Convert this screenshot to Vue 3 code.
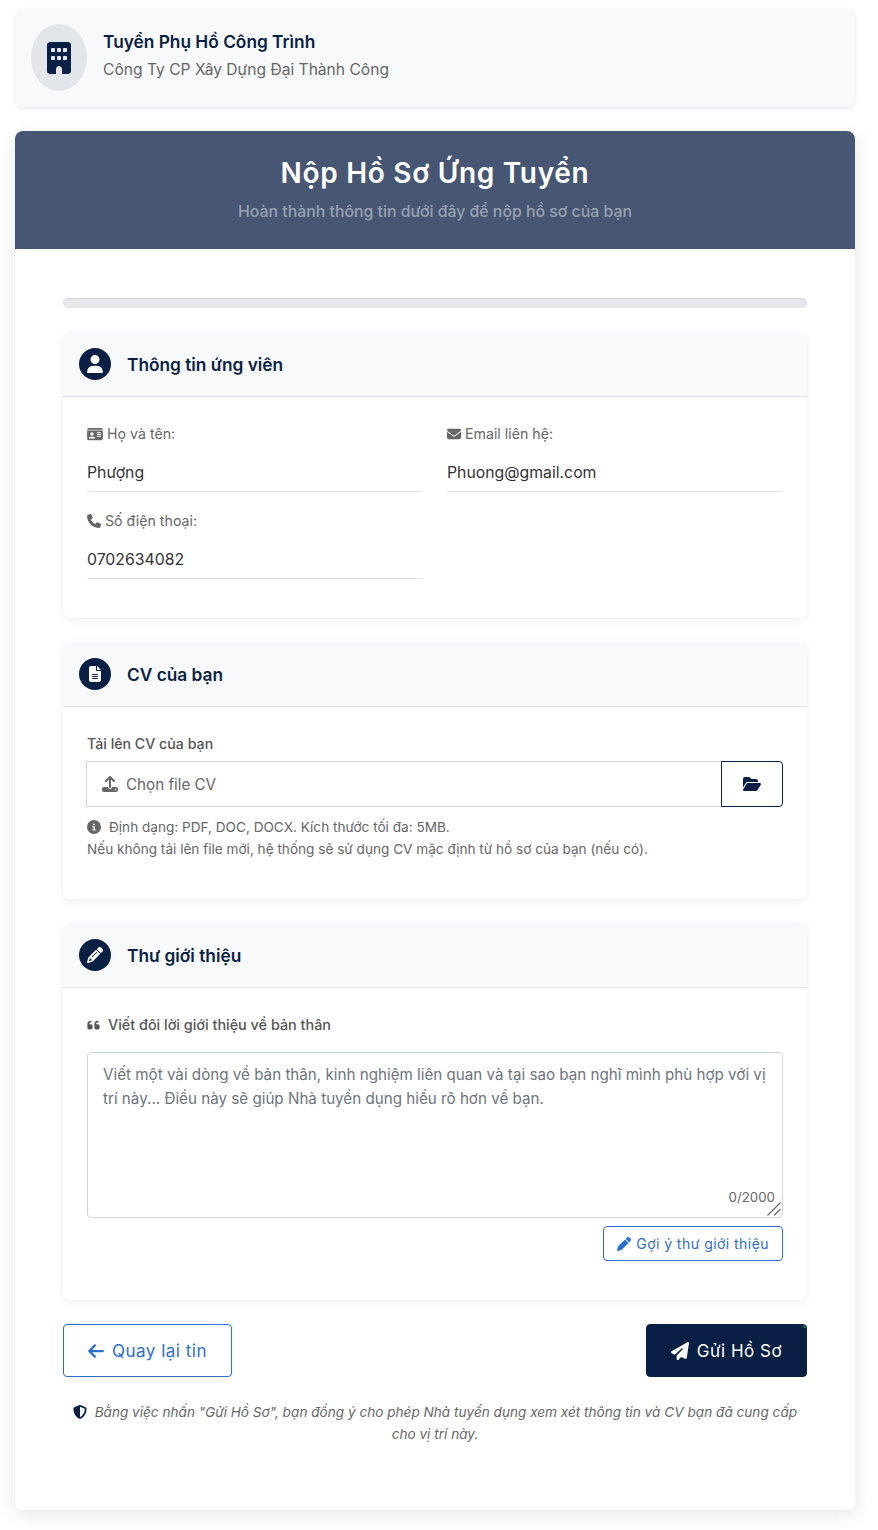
<template>
  <div class="page">
    <div class="job-bar">
      <div class="job-logo">
        <svg class="ic" viewBox="0 0 384 512" width="24" height="32"><path :d="icons.building" /></svg>
      </div>
      <div class="job-text">
        <div class="job-title">Tuyển Phụ Hồ Công Trình</div>
        <div class="job-company">Công Ty CP Xây Dựng Đại Thành Công</div>
      </div>
    </div>

    <div class="main-card">
      <div class="main-head">
        <h1>Nộp Hồ Sơ Ứng Tuyển</h1>
        <p>Hoàn thành thông tin dưới đây để nộp hồ sơ của bạn</p>
      </div>

      <div class="main-body">
        <div class="progress"></div>

        <section class="box">
          <div class="box-head">
            <span class="box-icon"><svg class="ic" viewBox="0 0 448 512" width="16" height="18"><path :d="icons.user" /></svg></span>
            <h2>Thông tin ứng viên</h2>
          </div>
          <div class="box-body info-grid">
            <div class="field" v-for="f in fields" :key="f.label">
              <label>
                <svg class="ic" :viewBox="f.box" :width="f.w" height="14"><path :d="f.icon" /></svg>
                {{ f.label }}
              </label>
              <input type="text" readonly :value="f.value" />
            </div>
          </div>
        </section>

        <section class="box">
          <div class="box-head">
            <span class="box-icon"><svg class="ic" viewBox="0 0 384 512" width="12" height="16"><path :d="icons.file" /></svg></span>
            <h2>CV của bạn</h2>
          </div>
          <div class="box-body cv-body">
            <div class="cv-label">Tải lên CV của bạn</div>
            <div class="file-row">
              <div class="file-name">
                <svg class="ic" viewBox="0 0 512 512" width="16" height="16"><path :d="icons.upload" /></svg>
                <span>Chọn file CV</span>
              </div>
              <button class="file-btn" type="button">
                <svg class="ic" viewBox="0 0 576 512" width="18" height="16"><path :d="icons.folder" /></svg>
              </button>
            </div>
            <div class="hint">
              <div><svg class="ic info" viewBox="0 0 512 512" width="14" height="14"><path :d="icons.info" /></svg>Định dạng: PDF, DOC, DOCX. Kích thước tối đa: 5MB.</div>
              <div>Nếu không tải lên file mới, hệ thống sẽ sử dụng CV mặc định từ hồ sơ của bạn (nếu có).</div>
            </div>
          </div>
        </section>

        <section class="box">
          <div class="box-head">
            <span class="box-icon"><svg class="ic" viewBox="0 0 512 512" width="16" height="16"><path :d="icons.pencil" /></svg></span>
            <h2>Thư giới thiệu</h2>
          </div>
          <div class="box-body letter-body">
            <div class="letter-label">
              <svg class="ic" viewBox="0 0 448 512" width="13" height="14"><path :d="icons.quote" /></svg>
              Viết đôi lời giới thiệu về bản thân
            </div>
            <div class="area-wrap">
              <textarea placeholder="Viết một vài dòng về bản thân, kinh nghiệm liên quan và tại sao bạn nghĩ mình phù hợp với vị trí này... Điều này sẽ giúp Nhà tuyển dụng hiểu rõ hơn về bạn."></textarea>
              <span class="counter">0/2000</span>
              <svg class="grip" viewBox="0 0 14 14" width="14" height="14">
                <path d="M0.5 13.5L13.5 0.5M7 13.5L13.5 7" />
              </svg>
            </div>
            <div class="suggest-row">
              <button class="suggest" type="button">
                <svg class="ic" viewBox="0 0 512 512" width="14" height="14"><path :d="icons.pen" /></svg>
                Gợi ý thư giới thiệu
              </button>
            </div>
          </div>
        </section>

        <div class="actions">
          <button class="back" type="button">
            <svg class="ic" viewBox="0 0 448 512" width="16" height="18"><path :d="icons.arrow" /></svg>
            Quay lại tin
          </button>
          <button class="send" type="button">
            <svg class="ic" viewBox="0 0 512 512" width="18" height="18"><path :d="icons.plane" /></svg>
            Gửi Hồ Sơ
          </button>
        </div>

        <p class="terms">
          <svg class="ic shield" viewBox="0 0 512 512" width="14" height="14"><path :d="icons.shield" /></svg>
          Bằng việc nhấn "Gửi Hồ Sơ", bạn đồng ý cho phép Nhà tuyển dụng xem xét thông tin và CV bạn đã cung cấp cho vị trí này.
        </p>
      </div>
    </div>
  </div>
</template>

<script setup>
const icons = {
  building: 'M48 0C21.5 0 0 21.5 0 48V464c0 26.5 21.5 48 48 48h96V432c0-26.5 21.5-48 48-48s48 21.5 48 48v80h96c26.5 0 48-21.5 48-48V48c0-26.5-21.5-48-48-48H48zM64 240c0-8.8 7.2-16 16-16h32c8.8 0 16 7.2 16 16v32c0 8.8-7.2 16-16 16H80c-8.8 0-16-7.2-16-16V240zm112-16h32c8.8 0 16 7.2 16 16v32c0 8.8-7.2 16-16 16H176c-8.8 0-16-7.2-16-16V240c0-8.8 7.2-16 16-16zm80 16c0-8.8 7.2-16 16-16h32c8.8 0 16 7.2 16 16v32c0 8.8-7.2 16-16 16H272c-8.8 0-16-7.2-16-16V240zM80 96h32c8.8 0 16 7.2 16 16v32c0 8.8-7.2 16-16 16H80c-8.8 0-16-7.2-16-16V112c0-8.8 7.2-16 16-16zm80 16c0-8.8 7.2-16 16-16h32c8.8 0 16 7.2 16 16v32c0 8.8-7.2 16-16 16H176c-8.8 0-16-7.2-16-16V112zM272 96h32c8.8 0 16 7.2 16 16v32c0 8.8-7.2 16-16 16H272c-8.8 0-16-7.2-16-16V112c0-8.8 7.2-16 16-16z',
  user: 'M224 256A128 128 0 1 0 224 0a128 128 0 1 0 0 256zm-45.7 48C79.8 304 0 383.8 0 482.3C0 498.7 13.3 512 29.7 512H418.3c16.4 0 29.7-13.3 29.7-29.7C448 383.8 368.2 304 269.7 304H178.3z',
  idCard: 'M0 96l576 0c0-35.3-28.7-64-64-64H64C28.7 32 0 60.7 0 96zm0 32V416c0 35.3 28.7 64 64 64H512c35.3 0 64-28.7 64-64V128H0zM64 405.3c0-29.5 23.9-53.3 53.3-53.3H234.7c29.5 0 53.3 23.9 53.3 53.3c0 5.9-4.8 10.7-10.7 10.7H74.7c-5.9 0-10.7-4.8-10.7-10.7zM176 192a64 64 0 1 1 0 128 64 64 0 1 1 0-128zm176 16c0-8.8 7.2-16 16-16H496c8.8 0 16 7.2 16 16s-7.2 16-16 16H368c-8.8 0-16-7.2-16-16zm0 64c0-8.8 7.2-16 16-16H496c8.8 0 16 7.2 16 16s-7.2 16-16 16H368c-8.8 0-16-7.2-16-16zm0 64c0-8.8 7.2-16 16-16H496c8.8 0 16 7.2 16 16s-7.2 16-16 16H368c-8.8 0-16-7.2-16-16z',
  envelope: 'M48 64C21.5 64 0 85.5 0 112c0 15.1 7.1 29.3 19.2 38.4L236.8 313.6c11.4 8.5 27 8.5 38.4 0L492.8 150.4c12.1-9.1 19.2-23.3 19.2-38.4c0-26.5-21.5-48-48-48H48zM0 176V384c0 35.3 28.7 64 64 64H448c35.3 0 64-28.7 64-64V176L294.4 339.2c-22.8 17.1-54 17.1-76.8 0L0 176z',
  phone: 'M164.9 24.6c-7.7-18.6-28-28.5-47.4-23.2l-88 24C12.1 30.2 0 46 0 64C0 311.4 200.6 512 448 512c18 0 33.8-12.1 38.6-29.5l24-88c5.3-19.4-4.6-39.7-23.2-47.4l-96-40c-16.3-6.8-35.2-2.1-46.3 11.6L304.7 368C234.3 334.7 177.3 277.7 144 207.3L193.3 167c13.7-11.2 18.4-30 11.6-46.3l-40-96z',
  file: 'M64 0C28.7 0 0 28.7 0 64V448c0 35.3 28.7 64 64 64H320c35.3 0 64-28.7 64-64V160H256c-17.7 0-32-14.3-32-32V0H64zM256 0V128H384L256 0zM112 256H272c8.8 0 16 7.2 16 16s-7.2 16-16 16H112c-8.8 0-16-7.2-16-16s7.2-16 16-16zm0 64H272c8.8 0 16 7.2 16 16s-7.2 16-16 16H112c-8.8 0-16-7.2-16-16s7.2-16 16-16zm0 64H272c8.8 0 16 7.2 16 16s-7.2 16-16 16H112c-8.8 0-16-7.2-16-16s7.2-16 16-16z',
  upload: 'M288 109.3V352c0 17.7-14.3 32-32 32s-32-14.3-32-32V109.3l-73.4 73.4c-12.5 12.5-32.8 12.5-45.3 0s-12.5-32.8 0-45.3l128-128c12.5-12.5 32.8-12.5 45.3 0l128 128c12.5 12.5 12.5 32.8 0 45.3s-32.8 12.5-45.3 0L288 109.3zM64 352H192c0 35.3 28.7 64 64 64s64-28.7 64-64H448c35.3 0 64 28.7 64 64v32c0 35.3-28.7 64-64 64H64c-35.3 0-64-28.7-64-64V416c0-35.3 28.7-64 64-64zM432 456a24 24 0 1 0 0-48 24 24 0 1 0 0 48z',
  folder: 'M88.7 223.8L0 375.8V96C0 60.7 28.7 32 64 32H181.5c17 0 33.3 6.7 45.3 18.7l26.5 26.5c12 12 28.3 18.7 45.3 18.7H416c35.3 0 64 28.7 64 64v32H144c-22.8 0-43.8 12.1-55.3 31.8zm27.6 16.1C122.1 230 132.6 224 144 224H544c11.5 0 22 6.1 27.7 16.1s5.7 22.2-.1 32.1l-112 192C453.9 474 443.4 480 432 480H32c-11.5 0-22-6.1-27.7-16.1s-5.7-22.2 .1-32.1l112-192z',
  info: 'M256 512A256 256 0 1 0 256 0a256 256 0 1 0 0 512zM216 336h24V272H216c-13.3 0-24-10.7-24-24s10.7-24 24-24h48c13.3 0 24 10.7 24 24v88h8c13.3 0 24 10.7 24 24s-10.7 24-24 24H216c-13.3 0-24-10.7-24-24s10.7-24 24-24zm40-208a32 32 0 1 1 0 64 32 32 0 1 1 0-64z',
  pencil: 'M410.3 231l11.3-11.3-33.9-33.9-62.1-62.1L291.7 89.8l-11.3 11.3-22.6 22.6L58.6 322.9c-10.4 10.4-18 23.3-22.2 37.4L1 480.7c-2.5 8.4-.2 17.5 6.1 23.7s15.3 8.5 23.7 6.1l120.3-35.4c14.1-4.2 27-11.8 37.4-22.2L387.7 253.7 410.3 231zM160 399.4l-9.1 22.7c-4 3.1-8.5 5.4-13.3 6.9L59.4 452l23-78.1c1.4-4.9 3.8-9.4 6.9-13.3l22.7-9.1v32c0 8.8 7.2 16 16 16h32zM362.7 18.7L348.3 33.2 325.7 55.8 314.3 67.1l33.9 33.9 62.1 62.1 33.9 33.9 11.3-11.3 22.6-22.6 14.5-14.5c25-25 25-65.5 0-90.5L453.3 18.7c-25-25-65.5-25-90.5 0zm-47.4 168l-144 144c-6.2 6.2-16.4 6.2-22.6 0s-6.2-16.4 0-22.6l144-144c6.2-6.2 16.4-6.2 22.6 0s6.2 16.4 0 22.6z',
  pen: 'M362.7 19.3L314.3 67.7 444.3 197.7l48.4-48.4c25-25 25-65.5 0-90.5L453.3 19.3c-25-25-65.5-25-90.5 0zm-71 71L58.6 323.5c-10.4 10.4-18 23.3-22.2 37.4L1 481.2C-1.5 489.7 .8 498.8 7 505s15.3 8.5 23.7 6.1l120.3-35.4c14.1-4.2 27-11.8 37.4-22.2L421.7 220.3 291.7 90.3z',
  quote: 'M0 216C0 149.7 53.7 96 120 96h8c17.7 0 32 14.3 32 32s-14.3 32-32 32h-8c-30.9 0-56 25.1-56 56v8h64c35.3 0 64 28.7 64 64v64c0 35.3-28.7 64-64 64H64c-35.3 0-64-28.7-64-64V216zm256 0c0-66.3 53.7-120 120-120h8c17.7 0 32 14.3 32 32s-14.3 32-32 32h-8c-30.9 0-56 25.1-56 56v8h64c35.3 0 64 28.7 64 64v64c0 35.3-28.7 64-64 64H320c-35.3 0-64-28.7-64-64V216z',
  arrow: 'M9.4 233.4c-12.5 12.5-12.5 32.8 0 45.3l160 160c12.5 12.5 32.8 12.5 45.3 0s12.5-32.8 0-45.3L109.2 288 416 288c17.7 0 32-14.3 32-32s-14.3-32-32-32l-306.7 0L214.6 118.6c12.5-12.5 12.5-32.8 0-45.3s-32.8-12.5-45.3 0l-160 160z',
  plane: 'M498.1 5.6c10.1 7 15.4 19.1 13.5 31.2l-64 416c-1.5 9.7-7.4 18.2-16 23s-18.9 5.4-28 1.6L284 427.7l-68.5 74.1c-8.9 9.7-22.9 12.9-35.2 8.1S160 493.2 160 480V396.4c0-4 1.5-7.8 4.2-10.7L331.8 202.8c5.8-6.3 5.6-16-.4-22s-15.7-6.4-22-.7L106 360.8 17.7 316.6C7.1 311.3 .3 300.7 0 288.9s5.9-22.8 16.1-28.7l448-256c10.7-6.1 23.9-5.5 34 1.4z',
  shield: 'M256 0c4.6 0 9.2 1 13.4 2.9L457.7 82.8c22 9.3 38.4 31 38.3 57.2c-.5 99.2-41.3 280.7-213.6 363.2c-16.7 8-36.1 8-52.8 0C57.3 420.7 16.5 239.2 16 140c-.1-26.2 16.3-47.9 38.3-57.2L242.7 2.9C246.8 1 251.4 0 256 0zm0 66.8V444.8C394 378 431.1 230.1 432 141.4L256 66.8l0 0z'
}

const fields = [
  { label: 'Họ và tên:', value: 'Phượng', icon: icons.idCard, box: '0 0 576 512', w: 16 },
  { label: 'Email liên hệ:', value: 'Phuong@gmail.com', icon: icons.envelope, box: '0 0 512 512', w: 14 },
  { label: 'Số điện thoại:', value: '0702634082', icon: icons.phone, box: '0 0 512 512', w: 14 }
]
</script>

<style>
html, body {
  background: #fff;
}
</style>

<style scoped>
.page {
  width: 840px;
  margin-left: 15px;
  padding: 8px 0 19px;
  font-family: Inter, "Noto Sans", sans-serif;
  color: #333;
}

.ic {
  fill: currentColor;
  flex: none;
}

.job-bar {
  height: 99px;
  box-sizing: border-box;
  display: flex;
  align-items: center;
  gap: 16px;
  padding: 0 16px;
  background: #f8f9fa;
  border-radius: 8px;
  box-shadow: 0 2px 5px rgba(0, 0, 0, 0.08);
  margin-bottom: 24px;
}

.job-logo {
  width: 56px;
  height: 67px;
  border-radius: 50%;
  background: #e2e5ea;
  color: #0a1f44;
  display: flex;
  align-items: center;
  justify-content: center;
}

.job-text {
  padding-bottom: 3px;
}

.job-title {
  font-size: 17.3px;
  font-weight: 600;
  color: #0a1f44;
  line-height: 24px;
  margin-bottom: 4px;
}

.job-company {
  font-size: 15.6px;
  color: #666;
  line-height: 24px;
}

.main-card {
  background: #fff;
  border-radius: 8px;
  box-shadow: 0 5px 20px rgba(0, 0, 0, 0.1);
  overflow: hidden;
}

.main-head {
  height: 118px;
  box-sizing: border-box;
  padding-top: 22px;
  background: #475773;
  text-align: center;
}

.main-head h1 {
  margin: 0;
  font-size: 28px;
  font-weight: 600;
  letter-spacing: 0.7px;
  line-height: 40px;
  color: #fff;
}

.main-head p {
  margin: 7px 0 0;
  font-size: 15.85px;
  font-weight: 500;
  line-height: 24px;
  color: rgba(255, 255, 255, 0.45);
}

.main-body {
  padding: 49px 48px 65px;
}

.progress {
  height: 10px;
  border-radius: 5px;
  background: #e6e8ec;
  box-shadow: inset 0 1px 2px rgba(0, 0, 0, 0.08);
  margin-bottom: 24px;
}

.box {
  border-radius: 8px;
  background: #fff;
  box-shadow: 0 2px 8px rgba(0, 0, 0, 0.07);
  margin-bottom: 24px;
  overflow: hidden;
}

.box-head {
  height: 65px;
  box-sizing: border-box;
  display: flex;
  align-items: center;
  gap: 16px;
  padding: 0 16px;
  background: #f8f9fa;
  border-bottom: 1px solid #dee2e6;
}

.box-icon {
  width: 32px;
  height: 32px;
  border-radius: 50%;
  background: #0a1f44;
  color: #fff;
  display: flex;
  align-items: center;
  justify-content: center;
}

.box-head h2 {
  margin: 0;
  font-size: 17.3px;
  font-weight: 600;
  color: #0a1f44;
}

.box-body {
  padding: 24px;
}

.info-grid {
  display: grid;
  grid-template-columns: 1fr 1fr;
  column-gap: 24px;
  row-gap: 17px;
  height: 221px;
  box-sizing: border-box;
  padding-top: 25px;
  align-content: start;
}

.field label {
  display: flex;
  align-items: center;
  gap: 4px;
  font-size: 14.2px;
  line-height: 24px;
  color: #666;
  margin-bottom: 7px;
}

.field input {
  display: block;
  width: 100%;
  box-sizing: border-box;
  height: 39px;
  padding: 0;
  border: 0;
  border-bottom: 1px solid #dee2e6;
  outline: none;
  font: inherit;
  font-size: 15.8px;
  color: #333;
  background: transparent;
}

.cv-body {
  height: 192px;
  box-sizing: border-box;
  padding-top: 25px;
}

.cv-label {
  font-size: 14.2px;
  font-weight: 500;
  color: #555;
  line-height: 24px;
  margin-bottom: 5px;
}

.file-row {
  display: flex;
  height: 46px;
}

.file-name {
  flex: 1;
  display: flex;
  align-items: center;
  gap: 8px;
  padding-left: 15px;
  margin-left: -1px;
  border: 1px solid #ced4da;
  border-right: 0;
  color: #666;
  font-size: 15.2px;
}

.file-btn {
  width: 62px;
  padding: 0;
  background: #fff;
  border: 1px solid #0a1f44;
  border-radius: 0 4px 4px 0;
  color: #0a1f44;
  display: flex;
  align-items: center;
  justify-content: center;
}

.hint {
  margin-top: 9px;
  font-size: 13.6px;
  line-height: 22px;
  color: #666;
}

.hint .info {
  vertical-align: -2px;
  margin-right: 8px;
}

.letter-body {
  padding-top: 25px;
  padding-bottom: 39px;
}

.letter-label {
  display: flex;
  align-items: center;
  gap: 8px;
  font-size: 14.4px;
  font-weight: 500;
  color: #555;
  line-height: 24px;
  margin-bottom: 15px;
}

.area-wrap {
  position: relative;
}

.area-wrap textarea {
  display: block;
  width: 100%;
  height: 166px;
  box-sizing: border-box;
  padding: 10px 15px;
  border: 1px solid #ced4da;
  border-radius: 4px;
  outline: none;
  font: inherit;
  font-size: 15.2px;
  line-height: 24px;
  color: #333;
  resize: none;
}

.area-wrap textarea::placeholder {
  color: #6c757d;
}

.counter {
  position: absolute;
  right: 8px;
  bottom: 13px;
  font-size: 13.3px;
  line-height: 16px;
  color: #666;
}

.grip {
  position: absolute;
  right: 2px;
  bottom: 2px;
  fill: none;
  stroke: #666;
  stroke-width: 1.2;
  pointer-events: none;
}

.suggest-row {
  display: flex;
  justify-content: flex-end;
  margin-top: 8px;
}

.suggest {
  height: 35px;
  padding: 0 13px;
  display: flex;
  align-items: center;
  gap: 5px;
  background: #fff;
  border: 1px solid #2c6ecb;
  border-radius: 4px;
  color: #2c6ecb;
  font: inherit;
  font-size: 14px;
  letter-spacing: 0.45px;
}

.actions {
  display: flex;
  justify-content: space-between;
}

.back, .send {
  height: 53px;
  display: flex;
  align-items: center;
  gap: 8px;
  border-radius: 4px;
  font: inherit;
  font-size: 17px;
  letter-spacing: 0.5px;
}

.back {
  width: 169px;
  justify-content: center;
  background: #fff;
  border: 1px solid #2c6ecb;
  color: #2c6ecb;
  box-shadow: 0 2px 5px rgba(0, 0, 0, 0.05);
}

.send {
  position: relative;
  width: 161px;
  justify-content: center;
  background: #0a1f44;
  border: 1px solid #0a1f44;
  color: #fff;
  overflow: hidden;
}

.send::after {
  content: "";
  position: absolute;
  top: -1px;
  right: -1px;
  width: 4px;
  height: 4px;
  border-radius: 50%;
  background: #2f6b4a;
}

.terms {
  margin: 24px 0 0;
  padding: 0 8px;
  text-align: center;
  font-size: 13.6px;
  font-style: italic;
  line-height: 22px;
  color: #666;
}

.terms .shield {
  color: #0a1f44;
  vertical-align: -2px;
  margin-right: 4px;
}
</style>
